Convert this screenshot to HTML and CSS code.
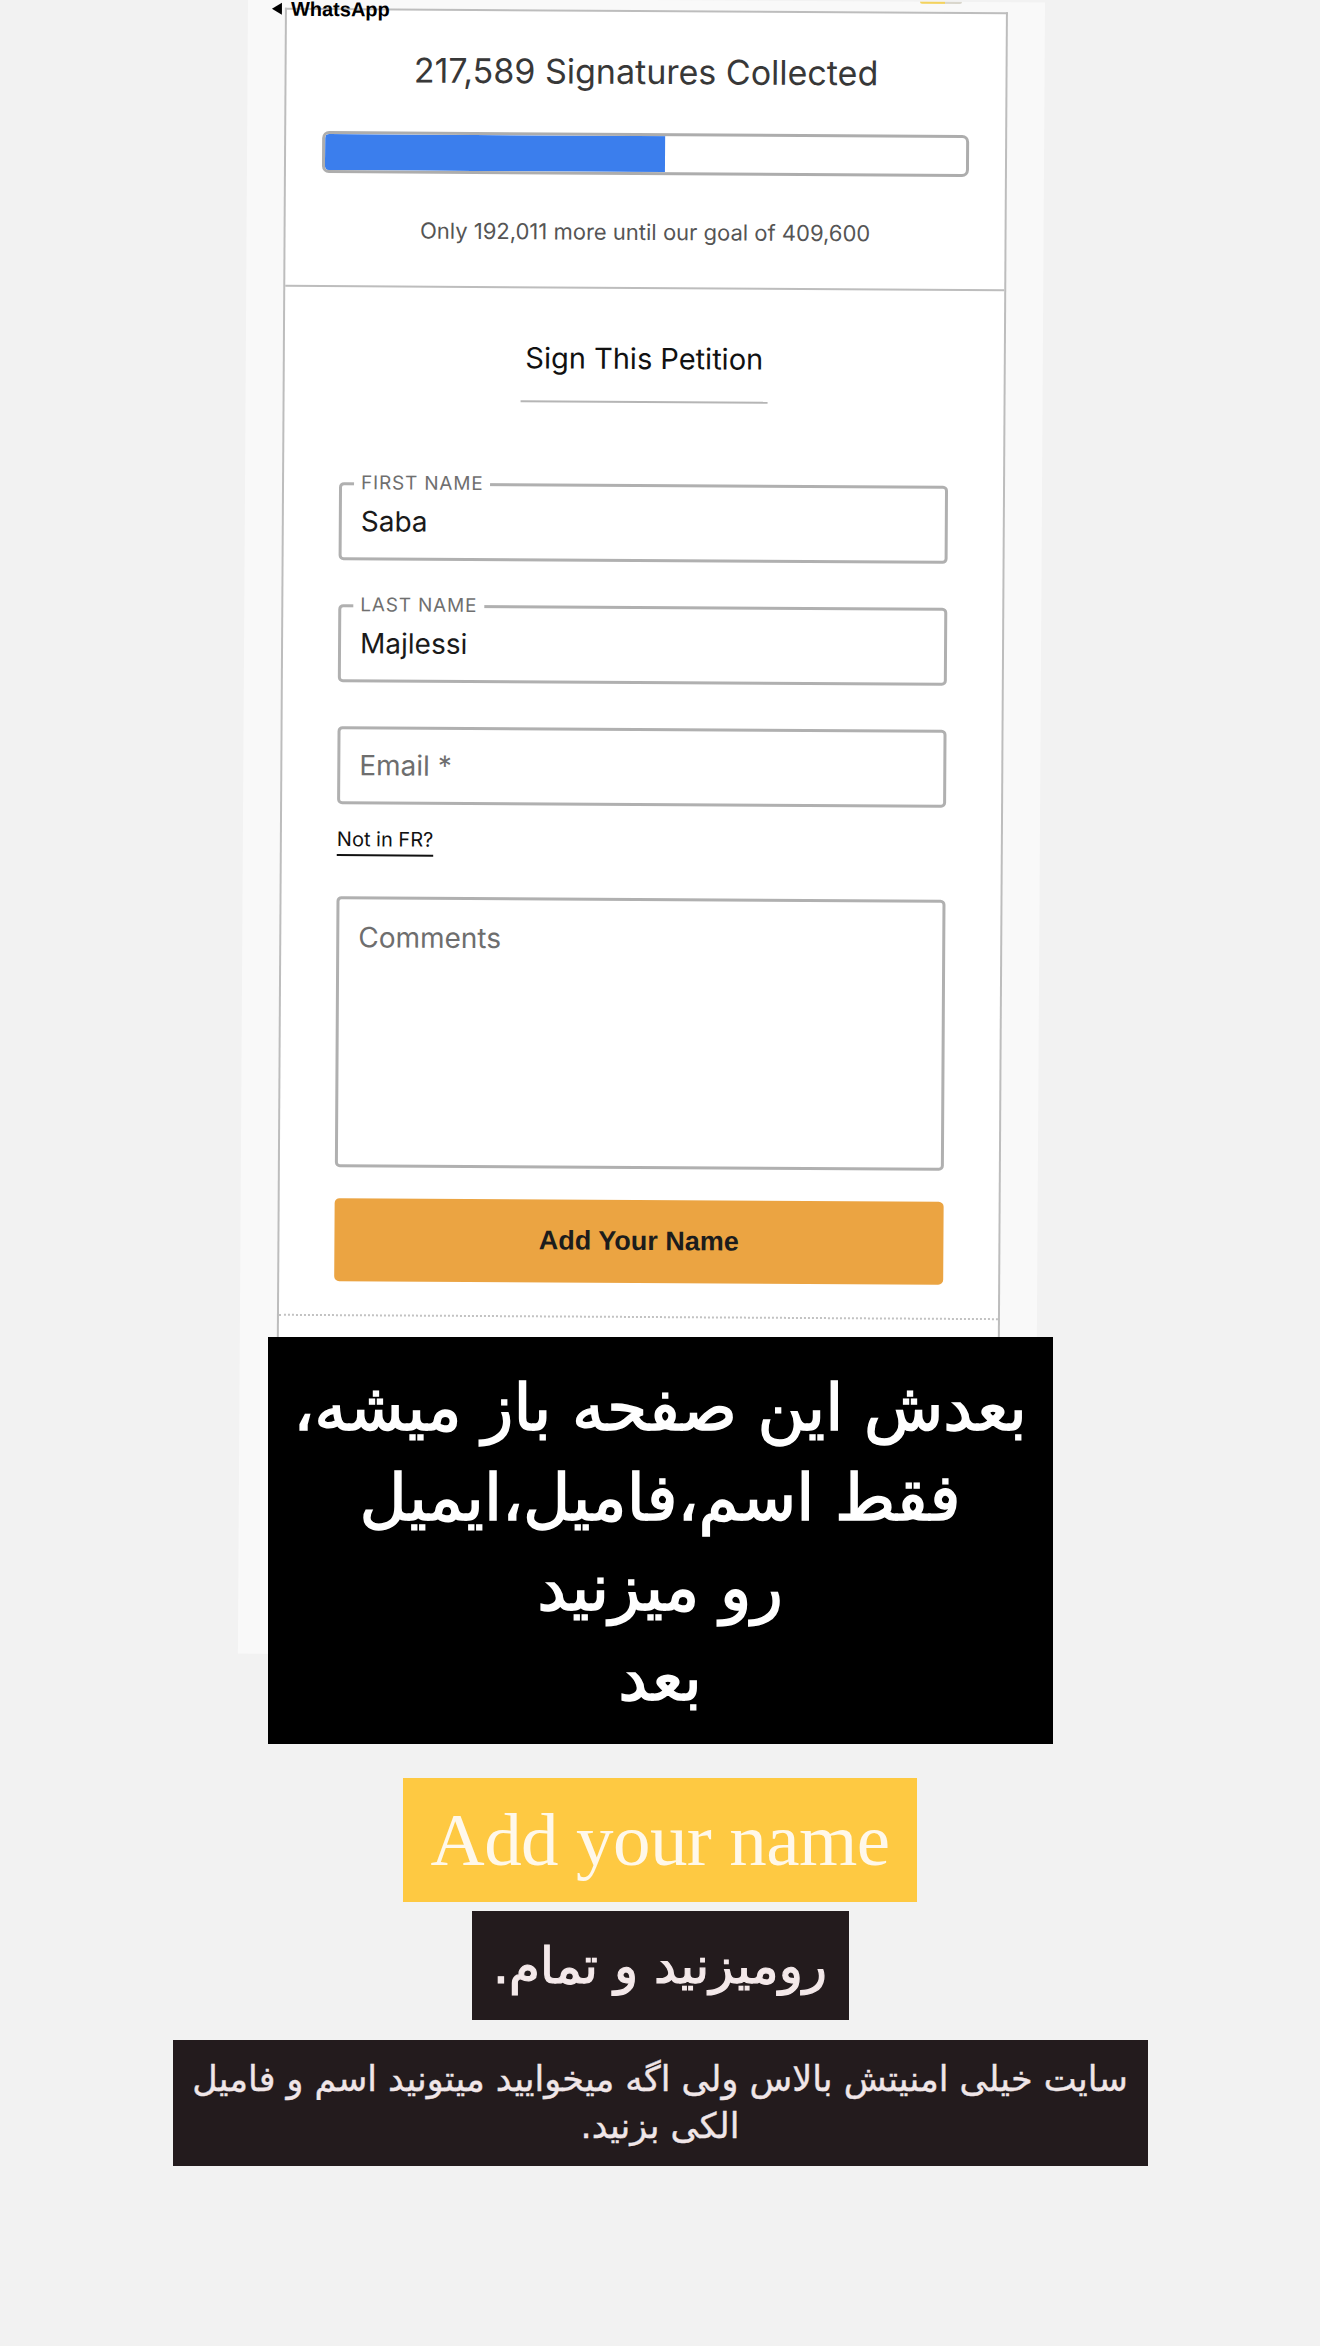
FILE: index.html
```html
<!DOCTYPE html>
<html lang="en">
<head>
    <meta charset="UTF-8">
    <meta name="viewport" content="width=device-width, initial-scale=1.0">
    <title>Sign This Petition</title>
    <link rel="stylesheet" href="styles.css">
</head>
<body>
    <div class="screenshot">
        <div class="status-bar"><span class="back-arrow"></span>WhatsApp</div>
        <div class="battery"></div>

        <div class="petition-card">
            <section class="counter">
                <h1>217,589 Signatures Collected</h1>
                <div class="progress">
                    <div class="progress-fill" style="width: 53.12%"></div>
                </div>
                <p class="goal">Only 192,011 more until our goal of 409,600</p>
            </section>

            <section class="sign-form">
                <h2>Sign This Petition</h2>
                <form id="petitionForm">
                    <div class="field">
                        <label for="firstName">First Name</label>
                        <input type="text" id="firstName" name="firstName" value="Saba">
                    </div>
                    <div class="field">
                        <label for="lastName">Last Name</label>
                        <input type="text" id="lastName" name="lastName" value="Majlessi">
                    </div>
                    <div class="field email">
                        <input type="email" id="email" name="email" placeholder="Email *">
                    </div>
                    <a href="#" class="country-link">Not in FR?</a>
                    <textarea name="comments" placeholder="Comments"></textarea>
                    <button type="submit">Add Your Name</button>
                </form>
            </section>

            <div class="dotted"></div>
        </div>
    </div>

    <div class="captions">
        <div class="caption caption-black" dir="rtl">
            <p>بعدش این صفحه باز میشه،<br>فقط اسم،فامیل،ایمیل<br>رو میزنید<br>بعد</p>
        </div>
        <div class="caption caption-yellow">Add your name</div>
        <div class="caption caption-dark" dir="rtl">رومیزنید و تمام.</div>
        <div class="caption caption-wide" dir="rtl">
            <p>سایت خیلی امنیتش بالاس ولی اگه میخوایید میتونید اسم و فامیل<br>الکی بزنید.</p>
        </div>
    </div>
</body>
</html>
```

FILE: styles.css
```css
body {
    margin: 0;
    padding: 0;
    min-height: 2346px;
    background: #f2f2f2;
    font-family: Inter, "Noto Sans", sans-serif;
    color: #1a1a1a;
    overflow: hidden;
}

/* phone screenshot, slightly tilted */
.screenshot {
    position: relative;
    width: 797px;
    height: 1656px;
    margin-left: 248px;
    background: #f9f9f9;
    overflow: hidden;
    transform: rotate(0.35deg);
    transform-origin: 50% 0;
}

.status-bar {
    position: absolute;
    top: 1px;
    left: 24px;
    z-index: 2;
    display: flex;
    align-items: center;
    gap: 9px;
    font-family: "Liberation Sans", sans-serif;
    font-weight: 700;
    font-size: 20px;
    line-height: 20px;
    color: #000;
}

.back-arrow {
    width: 0;
    height: 0;
    border-top: 6px solid transparent;
    border-bottom: 6px solid transparent;
    border-right: 10px solid #000;
}

.battery {
    position: absolute;
    top: -3px;
    left: 672px;
    width: 42px;
    height: 5px;
    border-radius: 2px;
    background: linear-gradient(to right, #f3d25e 60%, #d9d6cc 60%);
}

.petition-card {
    width: 723px;
    height: 1700px;
    margin: 10px 0 0 37px;
    background: #fff;
    border: 2px solid #bdbdbd;
    border-bottom: none;
    box-sizing: border-box;
}

.counter {
    padding: 38px 36px 41px;
    border-bottom: 2px solid #bdbdbd;
    text-align: center;
}

h1 {
    margin: 0;
    font-size: 34px;
    line-height: 44px;
    font-weight: 400;
    color: #383838;
}

.progress {
    height: 42px;
    margin-top: 39px;
    border: 3px solid #adadad;
    border-radius: 7px;
    box-sizing: border-box;
    background: #fff;
    overflow: hidden;
}

.progress-fill {
    height: 100%;
    background: #3b7eed;
    border-radius: 4px 0 0 4px;
}

.goal {
    margin: 43px 0 0;
    font-size: 22px;
    line-height: 28px;
    color: #555;
}

.sign-form {
    padding: 52px 55px 0;
}

h2 {
    width: 247px;
    margin: 0 auto;
    padding-bottom: 24px;
    border-bottom: 2px solid #b5b5b5;
    font-size: 29px;
    line-height: 36px;
    font-weight: 400;
    text-align: center;
    color: #111;
}

form {
    display: flex;
    flex-direction: column;
    margin-top: 81px;
}

.field {
    position: relative;
    margin-bottom: 44px;
}

.field.email {
    margin-bottom: 0;
}

.field label {
    position: absolute;
    top: -9px;
    left: 15px;
    padding: 0 7px;
    background: #fff;
    font-size: 19px;
    line-height: 20px;
    letter-spacing: 0.8px;
    text-transform: uppercase;
    color: #6f6f6f;
}

input,
textarea {
    width: 100%;
    box-sizing: border-box;
    border: 3px solid #b0b0b0;
    border-radius: 5px;
    background: #fff;
    font-family: Inter, "Noto Sans", sans-serif;
    font-size: 28px;
    color: #1a1a1a;
    outline: none;
}

input {
    height: 78px;
    padding: 0 19px;
}

input::placeholder,
textarea::placeholder {
    color: #6e6e6e;
}

.country-link {
    align-self: flex-start;
    margin-top: 23px;
    font-size: 20px;
    line-height: 24px;
    color: #111;
    text-decoration: underline;
    text-decoration-thickness: 2px;
    text-underline-offset: 8px;
}

textarea {
    height: 271px;
    margin-top: 45px;
    padding: 20px 19px;
    line-height: 36px;
    resize: none;
}

button {
    height: 83px;
    margin-top: 31px;
    border: none;
    border-radius: 5px;
    background: #eba442;
    font-family: "Liberation Sans", sans-serif;
    font-weight: 700;
    font-size: 27px;
    color: #1c1c1c;
    cursor: pointer;
}

.dotted {
    margin-top: 33px;
    border-top: 2px dotted #c2c2c2;
}

/* story captions stacked over the screenshot */
.captions {
    position: relative;
    margin-top: -319px;
    display: flex;
    flex-direction: column;
    align-items: center;
}

.caption {
    display: flex;
    align-items: center;
    justify-content: center;
    text-align: center;
    white-space: nowrap;
    box-sizing: border-box;
}

.caption p {
    margin: 0;
}

.caption-black {
    width: 785px;
    height: 407px;
    padding-top: 4px;
    background: #000;
    color: #fff;
    font-family: "DejaVu Sans", sans-serif;
    font-size: 65px;
    line-height: 90px;
    -webkit-text-stroke: 1.5px #fff;
}

.caption-yellow {
    width: 514px;
    height: 124px;
    margin-top: 34px;
    background: #fec942;
    color: #fff8ea;
    font-family: "Liberation Serif", serif;
    font-size: 75px;
    letter-spacing: -0.6px;
}

.caption-dark {
    width: 377px;
    height: 109px;
    margin-top: 9px;
    background: #231b1d;
    color: #f4e9ea;
    font-family: "DejaVu Sans", sans-serif;
    font-size: 50px;
    -webkit-text-stroke: 1.2px #f4e9ea;
}

.caption-wide {
    width: 975px;
    height: 126px;
    margin-top: 20px;
    background: #231b1d;
    color: #f0e6e8;
    font-family: "DejaVu Sans", sans-serif;
    font-size: 35px;
    line-height: 47px;
    -webkit-text-stroke: 0.4px #f0e6e8;
}
```
